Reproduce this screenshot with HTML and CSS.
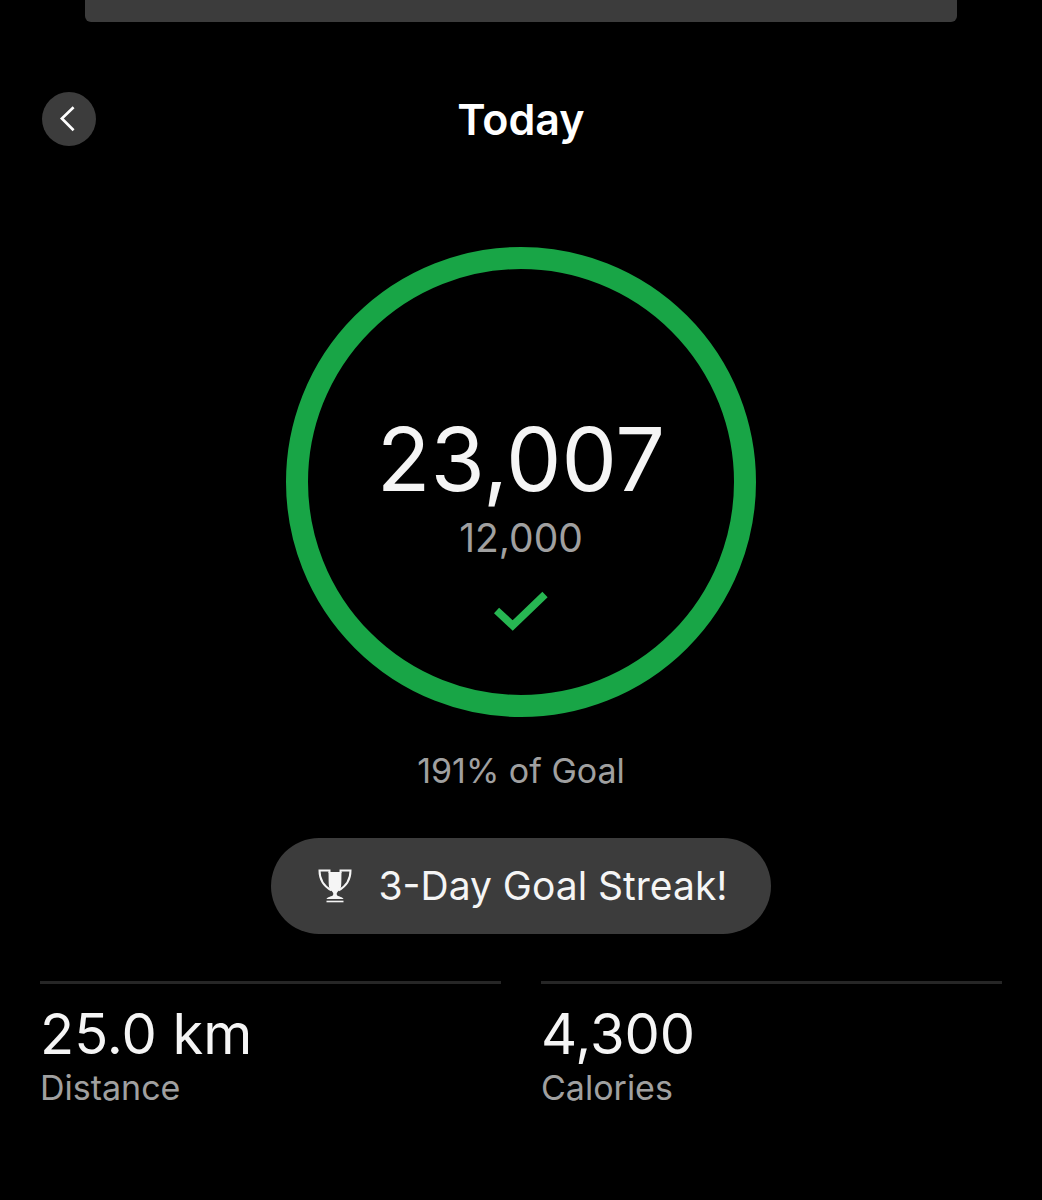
FILE: index.html
```html
<!DOCTYPE html>
<html lang="en">
<head>
<meta charset="utf-8">
<meta name="viewport" content="width=device-width, initial-scale=1">
<title>Today</title>
<link rel="stylesheet" href="styles.css">
</head>
<body>
<div class="sheet-edge"></div>
<header class="header">
  <button class="back" type="button" aria-label="Back">
    <svg class="back-icon" viewBox="0 0 53 53" aria-hidden="true"><path d="M31 15L19.500 26L31 37.500" fill="none" stroke="currentColor" stroke-width="2.600"/></svg>
  </button>
  <h1 class="title">Today</h1>
</header>
<main class="main">
  <section class="ring">
    <p class="steps">23,007</p>
    <p class="goal">12,000</p>
    <svg class="check" viewBox="0 0 54 40" aria-hidden="true"><path d="M2.500 19.500L18.700 34.500L51 3.500" fill="none" stroke="currentColor" stroke-width="7.600"/></svg>
  </section>
  <p class="percent">191% of Goal</p>
  <p class="streak">
    <svg class="trophy" viewBox="0 0 34 34" aria-hidden="true">
      <path d="M10.500 3H23.500C23.300 9 23.500 14 23 18C22 20.500 20.500 21.500 19.500 23C18.300 24.500 18.500 25.500 19.500 26.800C21 27.800 24.500 27.800 25.500 30H8.500C9.500 27.800 13 27.800 14.500 26.800C15.500 25.500 15.700 24.500 14.500 23C13.500 21.500 12 20.500 11 18C10.500 14 10.700 9 10.500 3Z" fill="currentColor"/>
      <path d="M11.500 4V1.500H1.500C1.500 10 4.500 16.500 13.500 21.500M22.500 4V1.500H32.500C32.500 10 29.500 16.500 20.500 21.500" fill="none" stroke="currentColor" stroke-width="2"/>
      <path d="M8.500 32.500H25.500" stroke="currentColor" stroke-width="1.600"/>
    </svg>
    <span>3-Day Goal Streak!</span>
  </p>
  <dl class="stats">
    <div class="stat"><dt class="label">Distance</dt><dd class="value">25.0 km</dd></div>
    <div class="stat"><dt class="label">Calories</dt><dd class="value">4,300</dd></div>
  </dl>
</main>
</body>
</html>
```

FILE: styles.css
```css
* {
  box-sizing: border-box;
}

body {
  margin: 0;
  background: #000;
  color: #f5f5f5;
  font-family: Inter, "Liberation Sans", sans-serif;
}

h1, p, dl, dd {
  margin: 0;
  font-weight: 400;
}

.sheet-edge {
  height: 22px;
  margin: 0 85px;
  border-radius: 0 0 6px 6px;
  background: #3c3c3c;
}

.header {
  display: grid;
  grid-template-columns: 54px 1fr 54px;
  align-items: center;
  margin-top: 70px;
  padding: 0 42px;
}

.back {
  width: 54px;
  height: 54px;
  padding: 0;
  border: 0;
  border-radius: 50%;
  background: #3c3c3c;
  color: #fff;
}

.back-icon {
  display: block;
  width: 100%;
}

.title {
  color: #fff;
  font-size: 43px;
  font-weight: 600;
  line-height: 54px;
  text-align: center;
}

.main {
  display: flex;
  flex-direction: column;
  align-items: center;
  padding: 0 40px 88px;
}

.ring {
  display: flex;
  flex-direction: column;
  align-items: center;
  width: 470px;
  max-width: 100%;
  aspect-ratio: 1;
  margin-top: 101px;
  padding-top: 142px;
  border: 22px solid #18a546;
  border-radius: 50%;
}

.steps {
  font-size: 88px;
  line-height: 96px;
}

.goal {
  margin-top: 7px;
  color: #a0a0a0;
  font-size: 39px;
  line-height: 48px;
}

.check {
  width: 54px;
  margin-top: 29px;
  color: #27b652;
}

.percent {
  margin-top: 32px;
  color: #a0a0a0;
  font-size: 34px;
  line-height: 44px;
}

.streak {
  display: flex;
  align-items: center;
  gap: 26px;
  margin-top: 45px;
  padding: 24px 43px 24px 47px;
  border-radius: 48px;
  background: #3c3c3c;
  font-size: 39px;
  line-height: 48px;
}

.trophy {
  width: 34px;
}

.stats {
  display: grid;
  grid-template-columns: 1fr 1fr;
  gap: 40px;
  width: 100%;
  margin-top: 47px;
}

.stat {
  display: flex;
  flex-direction: column-reverse;
  padding-top: 18px;
  border-top: 3px solid #262626;
}

.value {
  font-size: 56px;
  line-height: 64px;
}

.label {
  color: #a0a0a0;
  font-size: 34px;
  line-height: 44px;
}
```
